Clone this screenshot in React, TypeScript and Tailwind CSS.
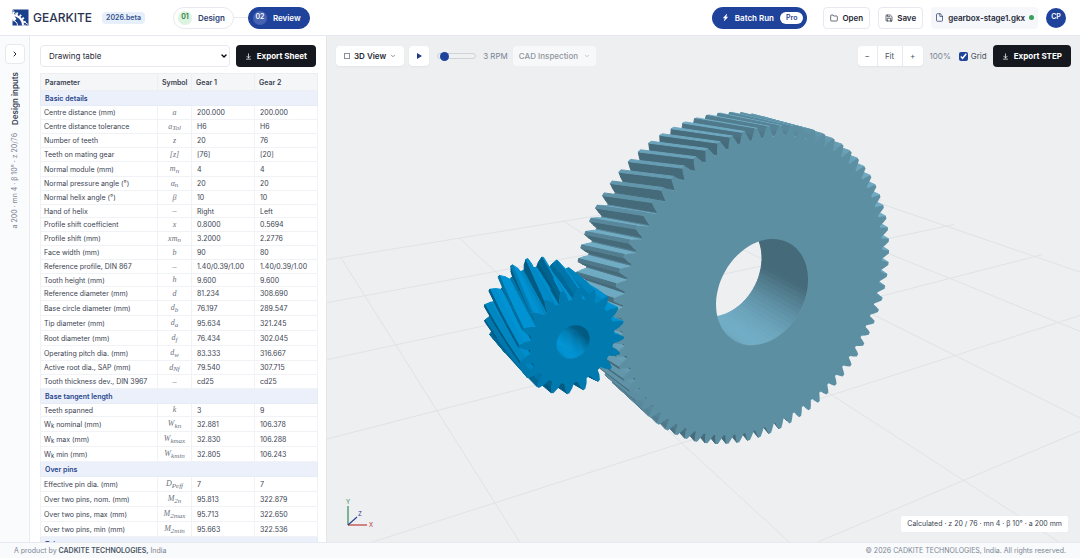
import { useState, type ReactNode } from "react";
import { ArrowDownToLine } from "lucide-react";
import { BsLightningChargeFill } from "react-icons/bs";
import { FiChevronDown, FiChevronRight, FiFile, FiFolder, FiSave } from "react-icons/fi";

type Vec = [number, number, number];

type Row = {
  label: ReactNode;
  symbol: string;
  sub?: string;
  values: [string, string];
  size: "short" | "normal" | "tall";
};

const rowHeights = {
  short: "h-[13px]",
  normal: "h-[14px]",
  tall: "h-[15px]",
};

const row = (
  label: ReactNode,
  symbol: string,
  sub: string,
  a: string,
  b: string,
  size: Row["size"] = "normal"
): Row => ({ label, symbol, sub, values: [a, b], size });

const wk = (text: string) => (
  <>
    W<sub className="text-[6px]">k</sub> {text}
  </>
);

const sections: { title: string; rows: Row[] }[] = [
  {
    title: "Basic details",
    rows: [
      row("Centre distance (mm)", "a", "", "200.000", "200.000"),
      row("Centre distance tolerance", "a", "Tol", "H6", "H6"),
      row("Number of teeth", "z", "", "20", "76"),
      row("Teeth on mating gear", "[z]", "", "[76]", "[20]"),
      row("Normal module (mm)", "m", "n", "4", "4", "tall"),
      row("Normal pressure angle (°)", "α", "n", "20", "20"),
      row("Normal helix angle (°)", "β", "", "10", "10"),
      row("Hand of helix", "–", "", "Right", "Left", "short"),
      row("Profile shift coefficient", "x", "", "0.8000", "0.5694"),
      row("Profile shift (mm)", "xm", "n", "3.2000", "2.2776"),
      row("Face width (mm)", "b", "", "90", "80"),
      row("Reference profile, DIN 867", "–", "", "1.40/0.39/1.00", "1.40/0.39/1.00"),
      row("Tooth height (mm)", "h", "", "9.600", "9.600", "short"),
      row("Reference diameter (mm)", "d", "", "81.234", "308.690"),
      row("Base circle diameter (mm)", "d", "b", "76.197", "289.547", "tall"),
      row("Tip diameter (mm)", "d", "a", "95.634", "321.245", "tall"),
      row("Root diameter (mm)", "d", "f", "76.434", "302.045", "tall"),
      row("Operating pitch dia. (mm)", "d", "w", "83.333", "316.667", "tall"),
      row("Active root dia., SAP (mm)", "d", "Nf", "79.540", "307.715"),
      row("Tooth thickness dev., DIN 3967", "–", "", "cd25", "cd25"),
    ],
  },
  {
    title: "Base tangent length",
    rows: [
      row("Teeth spanned", "k", "", "3", "9", "short"),
      row(wk("nominal (mm)"), "W", "kn", "32.881", "106.378", "tall"),
      row(wk("max (mm)"), "W", "kmax", "32.830", "106.288", "tall"),
      row(wk("min (mm)"), "W", "kmin", "32.805", "106.243", "tall"),
    ],
  },
  {
    title: "Over pins",
    rows: [
      row("Effective pin dia. (mm)", "D", "Peff", "7", "7", "tall"),
      row("Over two pins, nom. (mm)", "M", "2n", "95.813", "322.879", "tall"),
      row("Over two pins, max (mm)", "M", "2max", "95.713", "322.650", "tall"),
      row("Over two pins, min (mm)", "M", "2min", "95.663", "322.536", "tall"),
    ],
  },
  { title: "Tolerances", rows: [] },
];

/* ---------- 3D scene ---------- */

const FOCAL = 850;
const DISTANCE = 820;
const CENTER = [376, 253];
const GEAR_AT = [436.5, 257];
const PITCH = (21.57 * Math.PI) / 180;
const YAW = (31.2 * Math.PI) / 180;
const LIGHT: Vec = [0.1, 0.95, -0.53];

// x to the right, y up, z away along the gear axis; origin is the wheel's front centre
const toCamera = ([x, y, z]: Vec): Vec => {
  const right = x * Math.cos(YAW) - z * Math.sin(YAW);
  const ahead = x * Math.sin(YAW) + z * Math.cos(YAW);
  return [
    right + ((GEAR_AT[0] - CENTER[0]) / FOCAL) * DISTANCE,
    -ahead * Math.sin(PITCH) - y * Math.cos(PITCH) + ((GEAR_AT[1] - CENTER[1]) / FOCAL) * DISTANCE,
    ahead * Math.cos(PITCH) - y * Math.sin(PITCH) + DISTANCE,
  ];
};

const project = (p: Vec): [number, number] => {
  const [x, y, d] = toCamera(p);
  return [CENTER[0] + (x / d) * FOCAL, CENTER[1] + (y / d) * FOCAL];
};

const points = (list: number[][]) => list.map(([x, y]) => `${x.toFixed(1)},${y.toFixed(1)}`).join(" ");

type Gear = {
  cx: number;
  teeth: number;
  root: number;
  mid: number;
  tip: number;
  pitch: number;
  bore: number;
  z0: number;
  z1: number;
  hand: number;
  phase: number;
  slices: number;
  widths: number[];
  color: number[];
};

const wheel: Gear = {
  cx: 0,
  teeth: 76,
  root: 151,
  mid: 156,
  tip: 160.6,
  pitch: 154.3,
  bore: 54,
  z0: 0,
  z1: 80,
  hand: 1,
  phase: 0,
  slices: 1,
  widths: [0.42, 0.27, 0.11],
  color: [115, 176, 201],
};

const pinion: Gear = {
  cx: -201,
  teeth: 20,
  root: 38.2,
  mid: 43,
  tip: 47.8,
  pitch: 40.6,
  bore: 15,
  z0: -8,
  z1: 82,
  hand: -1,
  phase: 0.5,
  slices: 3,
  widths: [0.36, 0.24, 0.06],
  color: [0, 150, 216],
};

const shade = (color: number[], n: Vec) => {
  const dot = n[0] * LIGHT[0] + n[1] * LIGHT[1] + n[2] * LIGHT[2];
  const k = 0.6 + 0.4 * Math.max(0, dot);
  return `rgb(${color.map((c) => Math.round(c * k)).join(",")})`;
};

const profile = (g: Gear) => {
  const out: [number, number][] = [];
  const step = (2 * Math.PI) / g.teeth;
  for (let i = 0; i < g.teeth; i++) {
    const a = (i + g.phase) * step;
    const [r, m, t] = g.widths.map((w) => w * step);
    out.push([g.root, a - r], [g.mid, a - m], [g.tip, a - t], [g.tip, a + t], [g.mid, a + m], [g.root, a + r]);
  }
  return out;
};

const ring = (r: number, count: number) =>
  Array.from({ length: count }, (_, i): [number, number] => [r, (i / count) * 2 * Math.PI]);

const buildGear = (g: Gear) => {
  const at = (r: number, a: number, z: number, twisted: boolean): Vec => {
    const t = twisted ? a + (g.hand * (z - g.z0) * Math.tan(Math.PI / 18)) / g.pitch : a;
    return [g.cx + r * Math.cos(t), r * Math.sin(t), z];
  };
  const faces: { d: string; fill: string; depth: number }[] = [];
  const extrude = (shape: [number, number][], side: number, twisted: boolean) => {
    const slices = twisted ? g.slices : 1;
    shape.forEach(([r1, a1], i) => {
      const [r2, a2] = shape[(i + 1) % shape.length];
      for (let s = 0; s < slices; s++) {
        const za = g.z0 + ((g.z1 - g.z0) * s) / slices;
        const zb = g.z0 + ((g.z1 - g.z0) * (s + 1)) / slices;
        const quad = [at(r1, a1, za, twisted), at(r2, a2, za, twisted), at(r2, a2, zb, twisted), at(r1, a1, zb, twisted)];
        const flat = quad.map(project);
        const area = flat.reduce((sum, p, k) => {
          const q = flat[(k + 1) % 4];
          return sum + p[0] * q[1] - q[0] * p[1];
        }, 0);
        if (area * side <= 0) continue;
        // one shade along the whole tooth, taken at its front edge
        const [p, q] = [at(r1, a1, g.z0, twisted), at(r2, a2, g.z0, twisted)];
        const dx = q[0] - p[0];
        const dy = q[1] - p[1];
        const len = Math.hypot(dx, dy);
        faces.push({
          d: points(flat),
          fill: shade(g.color, [(side * dy) / len, (-side * dx) / len, 0]),
          depth: quad.reduce((sum, v) => sum + toCamera(v)[2], 0),
        });
      }
    });
  };
  extrude(profile(g), 1, true);
  extrude(ring(g.bore, 72), -1, false);
  faces.sort((a, b) => b.depth - a.depth);
  const outline = (shape: [number, number][]) =>
    `M${points(shape.map(([r, a]) => project(at(r, a, g.z0, false))))}Z`;
  return {
    faces,
    front: outline(profile(g)) + outline(ring(g.bore, 72)),
    frontFill: shade(g.color, [0, 0, -1]),
  };
};

const gears = [wheel, pinion].map(buildGear);

const GROUND = -170;
const gridLines = [
  ...[-667, -467, -267, -67, 133, 333, 533, 733].map((x) => [
    project([x, GROUND, x < -400 ? -200 : -500]),
    project([x, GROUND, 845]),
  ]),
  ...[-155, 45, 245, 445, 645, 845].map((z) => [project([-667, GROUND, z]), project([753, GROUND, z])]),
];

const Scene = ({ grid }: { grid: boolean }) => (
  <svg
    className="absolute inset-0 size-full"
    viewBox="0 0 753 506"
    preserveAspectRatio="xMidYMid slice"
    role="img"
    aria-label="Gear pair"
  >
    {grid && (
      <g stroke="#e0e3e6" strokeWidth="1">
        {gridLines.map(([a, b], i) => (
          <line key={i} x1={a[0]} y1={a[1]} x2={b[0]} y2={b[1]} />
        ))}
      </g>
    )}
    {gears.map((gear, i) => (
      <g key={i} strokeWidth="1" strokeLinejoin="round">
        {gear.faces.map((f, k) => (
          <polygon key={k} points={f.d} fill={f.fill} stroke={f.fill} />
        ))}
        <path d={gear.front} fill={gear.frontFill} fillRule="evenodd" />
      </g>
    ))}
  </svg>
);

const AxisGizmo = () => (
  <svg className="absolute bottom-2.5 left-4" width="34" height="36" viewBox="0 0 34 36" fill="none" strokeWidth="1.2">
    <path d="M5 29V10" stroke="#2e8b57" />
    <path d="M5 29H24" stroke="#c0393b" />
    <path d="M5 29L14 21" stroke="#2b3f8f" />
    <g className="font-[Inter,sans-serif] text-[6px]" stroke="none">
      <text x="3" y="8" fill="#2e8b57">Y</text>
      <text x="26" y="31" fill="#c0393b">X</text>
      <text x="15" y="20" fill="#2b3f8f">Z</text>
    </g>
  </svg>
);

/* ---------- Chrome ---------- */

const BrandLogo = () => (
  <div className="flex items-center gap-1">
    <svg width="17" height="17" viewBox="0 0 34 34" fill="none">
      <path d="M1 1H33V33H1V21C3 22 4 23 5 24L9 20L1 9Z" fill="#1c3f8c" />
      <g stroke="#fff">
        <path d="M1 12A21 21 0 0 1 22 33" strokeWidth="4" />
        <path d="M1 8A25 25 0 0 1 26 33" strokeWidth="5" strokeDasharray="3.5 4" />
        <path d="M1 1L11 15" strokeWidth="1.5" />
        <path d="M16 19L32 31" strokeWidth="2" />
        <path d="M1 23A10 10 0 0 1 11 33" strokeWidth="2" />
      </g>
    </svg>
    <span className="text-[12px] font-medium text-[#2b3350]">GEARKITE</span>
  </div>
);

const Header = () => (
  <header className="flex h-9 shrink-0 items-center justify-between border-b border-[#e6e9ef] bg-white pr-3.5 pl-3">
    <div className="flex items-center">
      <BrandLogo />
      <span className="ml-2.5 rounded bg-[#e6effa] px-1 text-[7px] leading-3 font-semibold text-[#34528f]">
        2026.beta
      </span>
      <nav className="ml-7 flex items-center">
        <a
          href="#design"
          className="flex h-[22px] items-center gap-1.5 rounded-full border border-[#e6e9ef] pr-2 pl-1 text-[8px] font-semibold text-[#2d4270]"
        >
          <span className="flex size-3.5 items-center justify-center rounded-full bg-[#dcf3e0] text-[7px] text-[#2c7a3f]">
            01
          </span>
          Design
        </a>
        <span className="h-px w-3.5 bg-[#e6e9ef]" />
        <a
          href="#review"
          className="flex h-[22px] items-center gap-1.5 rounded-full border border-[#1f429b] bg-[#1f429b] pr-2 pl-1 text-[8px] font-semibold text-white"
        >
          <span className="flex size-3.5 items-center justify-center rounded-full bg-[#4563b0] text-[7px]">02</span>
          Review
        </a>
      </nav>
    </div>

    <div className="flex items-center text-[8px] font-semibold text-[#1f2937]">
      <button className="flex h-[22px] items-center rounded-full bg-[#1f429b] pr-1 pl-2.5 text-white">
        <BsLightningChargeFill size={7} />
        <span className="ml-1.5">Batch Run</span>
        <span className="ml-1.5 rounded-full bg-white px-1.5 text-[7px] leading-3 text-[#1f429b]">Pro</span>
      </button>
      <button className="ml-4 flex h-[22px] items-center gap-1 rounded border border-[#e6e9ef] px-1.5">
        <FiFolder size={8} />
        Open
      </button>
      <button className="ml-2 flex h-[22px] items-center gap-1 rounded border border-[#e6e9ef] px-1.5">
        <FiSave size={8} />
        Save
      </button>
      <div className="ml-2 flex h-[22px] items-center rounded bg-[#f5f7fb] px-1">
        <FiFile size={9} className="mr-1 text-[#2d4270]" />
        gearbox-stage1.gkx
        <span className="ml-1 size-[5px] rounded-full bg-[#33a15a]" />
      </div>
      <button className="ml-2 size-5 rounded-full bg-[#1f429b] text-[7px] text-white">CP</button>
    </div>
  </header>
);

const Rail = () => (
  <aside className="flex w-[30px] shrink-0 flex-col items-center border-r border-[#e8ebf0] bg-[#fafbfd] pt-2">
    <button
      aria-label="Expand design inputs"
      className="flex size-5 items-center justify-center rounded border border-[#e6e9ef] bg-white text-[#1f2937]"
    >
      <FiChevronRight size={8} strokeWidth={3} />
    </button>
    <span className="mt-2 rotate-180 text-[8px] leading-3 font-semibold text-[#374151] [writing-mode:vertical-rl]">
      Design inputs
    </span>
    <span className="mt-2 rotate-180 text-[7px] leading-3 text-[#7b8494] [writing-mode:vertical-rl]">
      a 200 · mn 4 · β 10° · z 20/76
    </span>
  </aside>
);

const ExportButton = ({ children }: { children: ReactNode }) => (
  <button className="flex h-[22px] shrink-0 items-center gap-[5px] rounded bg-[#15181e] px-[9px] text-[8px] font-bold text-white">
    <ArrowDownToLine size={7} strokeWidth={2.5} />
    {children}
  </button>
);

const SheetTable = () => (
  <table className="w-full table-fixed border-collapse text-left text-[7px] leading-none text-[#3a4250]">
    <colgroup>
      <col />
      <col className="w-[34px]" />
      <col className="w-[63px]" />
      <col className="w-[63px]" />
    </colgroup>
    <thead>
      <tr className="h-[17px] bg-[#f5f6f8] *:border *:border-[#eceef2] *:p-0 *:px-1 *:font-semibold">
        <th>Parameter</th>
        <th>Symbol</th>
        <th>Gear 1</th>
        <th>Gear 2</th>
      </tr>
    </thead>
    {sections.map((section) => (
      <tbody key={section.title}>
        <tr className="h-[15px] bg-[#ebf0fa]">
          <th colSpan={4} className="border border-[#e6ecf6] p-0 px-1 font-semibold text-[#27458c]">
            {section.title}
          </th>
        </tr>
        {section.rows.map((r, i) => (
          <tr key={i} className={`${rowHeights[r.size]} *:border *:border-[#f0f2f5] *:p-0`}>
            <td className="pl-[3px]! whitespace-nowrap">{r.label}</td>
            <td className="text-center font-['Liberation_Serif',serif] text-[8px] text-[#6b7280] italic">
              {r.symbol}
              {r.sub && <sub className="text-[7px]">{r.sub}</sub>}
            </td>
            {r.values.map((v, k) => (
              <td key={k} className="pl-[5px]!">
                {v}
              </td>
            ))}
          </tr>
        ))}
      </tbody>
    ))}
  </table>
);

const SheetPanel = () => (
  <section className="flex w-[297px] shrink-0 flex-col overflow-hidden border-r border-[#e3e6ea] bg-white pt-[9px] pr-2 pl-2.5">
    <div className="flex items-center gap-1.5 pr-0.5">
      <div className="relative grow">
        <select
          aria-label="Sheet"
          className="block h-[22px] w-full appearance-none rounded border border-[#e6e9ef] bg-white pl-2 text-[8px] text-[#1f2937]"
        >
          <option>Drawing table</option>
          <option>Inspection sheet</option>
        </select>
        <FiChevronDown size={8} strokeWidth={4} className="pointer-events-none absolute top-[7px] right-0.5" />
      </div>
      <ExportButton>Export Sheet</ExportButton>
    </div>
    <div className="mt-1.5 min-h-0 grow overflow-hidden">
      <SheetTable />
    </div>
  </section>
);

const Viewport = () => {
  const [grid, setGrid] = useState(true);
  return (
    <main className="relative min-w-0 grow overflow-hidden bg-[#edeff1]">
      <Scene grid={grid} />
      <div className="relative flex items-center justify-between px-[9px] pt-[9px] text-[8px] text-[#4b5563]">
        <div className="flex items-center">
          <button className="flex h-5 items-center gap-1 rounded bg-white px-2 font-semibold text-[#1f2937] shadow-xs">
            <span className="size-1.5 border border-[#8a919c]" />
            3D View
            <FiChevronDown size={6} />
          </button>
          <button
            aria-label="Play"
            className="ml-[5px] flex size-5 items-center justify-center rounded bg-white text-[#1f3b82] shadow-xs"
          >
            <svg width="5" height="6" viewBox="0 0 5 6" fill="currentColor">
              <path d="M0 0L5 3L0 6Z" />
            </svg>
          </button>
          <input
            type="range"
            min="0"
            max="60"
            defaultValue="3"
            aria-label="Speed"
            className="ml-2 h-1.5 w-[39px] appearance-none rounded-full border border-[#cfd3d8] bg-[#eef0f2] [&::-webkit-slider-thumb]:size-[9px] [&::-webkit-slider-thumb]:appearance-none [&::-webkit-slider-thumb]:rounded-full [&::-webkit-slider-thumb]:bg-[#1f429b]"
          />
          <span className="ml-[7px] text-[#7b8494]">3 RPM</span>
          <button className="ml-[5px] flex h-5 items-center gap-1.5 rounded bg-[#f7f8f9] px-1.5 font-medium text-[#8f959e]">
            CAD Inspection
            <FiChevronDown size={6} />
          </button>
        </div>
        <div className="flex items-center">
          <div className="flex h-5 divide-x divide-[#e6e9ef] rounded bg-white shadow-xs">
            <button aria-label="Zoom out" className="w-5">
              −
            </button>
            <button className="w-[25px]">Fit</button>
            <button aria-label="Zoom in" className="w-5">
              +
            </button>
          </div>
          <span className="ml-[7px] text-[#7b8494]">100%</span>
          <label className="ml-2 flex items-center gap-[3px]">
            <input
              type="checkbox"
              checked={grid}
              onChange={(e) => setGrid(e.target.checked)}
              className="size-[9px] accent-[#1f429b]"
            />
            Grid
          </label>
          <div className="ml-1.5">
            <ExportButton>Export STEP</ExportButton>
          </div>
        </div>
      </div>
      <AxisGizmo />
      <div className="absolute right-3 bottom-2.5 rounded-xs bg-white px-1.5 text-[7px] leading-4 text-[#3a4250]">
        Calculated · z 20 / 76 · mn 4 · β 10° · a 200 mm
      </div>
    </main>
  );
};

const Footer = () => (
  <footer className="flex h-4 shrink-0 items-center justify-between border-t border-[#e6e9ef] bg-[#f8fafc] px-3.5 text-[7px] leading-3 text-[#7b8494]">
    <p>
      A product by <b className="font-semibold text-[#4b5563]">CADKITE TECHNOLOGIES,</b> India
    </p>
    <p>© 2026 CADKITE TECHNOLOGIES, India. All rights reserved.</p>
  </footer>
);

export default function App() {
  return (
    <div className="flex h-screen flex-col overflow-hidden font-[Inter,sans-serif]">
      <Header />
      <div className="flex min-h-0 grow">
        <Rail />
        <SheetPanel />
        <Viewport />
      </div>
      <Footer />
    </div>
  );
}
